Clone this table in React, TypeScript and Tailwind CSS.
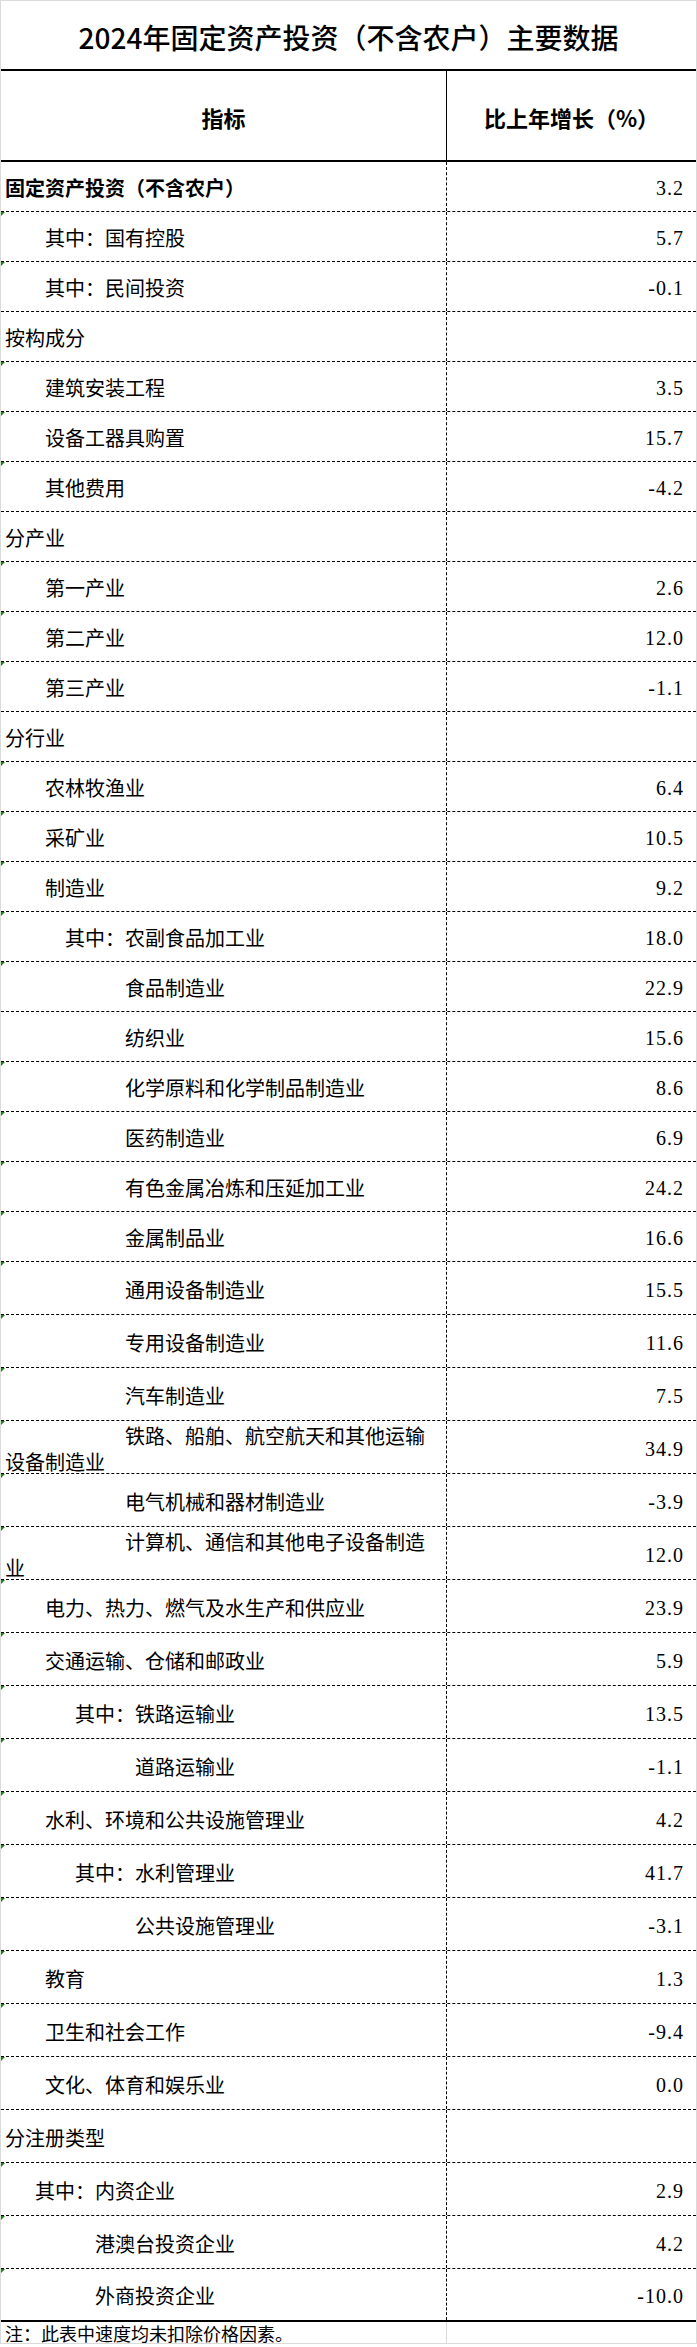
import React from "react";

type Row = {
  label: string;
  value?: string;
  indent: number;
  tri?: boolean;
  bold?: boolean;
  h: "a" | "b" | "c";
};

const indentClass: Record<number, string> = {
  0: "indent-0",
  30: "indent-[30px]",
  40: "indent-[40px]",
  60: "indent-[60px]",
  70: "indent-[70px]",
  90: "indent-[90px]",
  120: "indent-[120px]",
  130: "indent-[130px]",
};

const heightClass = {
  a: "h-[50px] border-b border-dashed border-black",
  b: "h-[53px] border-b border-dashed border-black",
  c: "h-[51px]",
};

const rows: Row[] = [
  { label: "固定资产投资（不含农户）", value: "3.2", indent: 0, bold: true, h: "a" },
  { label: "其中：国有控股", value: "5.7", indent: 40, tri: true, h: "a" },
  { label: "其中：民间投资", value: "-0.1", indent: 40, tri: true, h: "a" },
  { label: "按构成分", indent: 0, h: "a" },
  { label: "建筑安装工程", value: "3.5", indent: 40, tri: true, h: "a" },
  { label: "设备工器具购置", value: "15.7", indent: 40, tri: true, h: "a" },
  { label: "其他费用", value: "-4.2", indent: 40, tri: true, h: "a" },
  { label: "分产业", indent: 0, h: "a" },
  { label: "第一产业", value: "2.6", indent: 40, tri: true, h: "a" },
  { label: "第二产业", value: "12.0", indent: 40, tri: true, h: "a" },
  { label: "第三产业", value: "-1.1", indent: 40, tri: true, h: "a" },
  { label: "分行业", indent: 0, h: "a" },
  { label: "农林牧渔业", value: "6.4", indent: 40, tri: true, h: "a" },
  { label: "采矿业", value: "10.5", indent: 40, tri: true, h: "a" },
  { label: "制造业", value: "9.2", indent: 40, tri: true, h: "a" },
  { label: "其中：农副食品加工业", value: "18.0", indent: 60, tri: true, h: "a" },
  { label: "食品制造业", value: "22.9", indent: 120, tri: true, h: "a" },
  { label: "纺织业", value: "15.6", indent: 120, h: "a" },
  { label: "化学原料和化学制品制造业", value: "8.6", indent: 120, tri: true, h: "a" },
  { label: "医药制造业", value: "6.9", indent: 120, tri: true, h: "a" },
  { label: "有色金属冶炼和压延加工业", value: "24.2", indent: 120, tri: true, h: "a" },
  { label: "金属制品业", value: "16.6", indent: 120, tri: true, h: "a" },
  { label: "通用设备制造业", value: "15.5", indent: 120, tri: true, h: "b" },
  { label: "专用设备制造业", value: "11.6", indent: 120, tri: true, h: "b" },
  { label: "汽车制造业", value: "7.5", indent: 120, tri: true, h: "b" },
  { label: "铁路、船舶、航空航天和其他运输设备制造业", value: "34.9", indent: 120, tri: true, h: "b" },
  { label: "电气机械和器材制造业", value: "-3.9", indent: 120, tri: true, h: "b" },
  { label: "计算机、通信和其他电子设备制造业", value: "12.0", indent: 120, tri: true, h: "b" },
  { label: "电力、热力、燃气及水生产和供应业", value: "23.9", indent: 40, tri: true, h: "b" },
  { label: "交通运输、仓储和邮政业", value: "5.9", indent: 40, tri: true, h: "b" },
  { label: "其中：铁路运输业", value: "13.5", indent: 70, tri: true, h: "b" },
  { label: "道路运输业", value: "-1.1", indent: 130, tri: true, h: "b" },
  { label: "水利、环境和公共设施管理业", value: "4.2", indent: 40, tri: true, h: "b" },
  { label: "其中：水利管理业", value: "41.7", indent: 70, tri: true, h: "b" },
  { label: "公共设施管理业", value: "-3.1", indent: 130, tri: true, h: "b" },
  { label: "教育", value: "1.3", indent: 40, tri: true, h: "b" },
  { label: "卫生和社会工作", value: "-9.4", indent: 40, tri: true, h: "b" },
  { label: "文化、体育和娱乐业", value: "0.0", indent: 40, tri: true, h: "b" },
  { label: "分注册类型", indent: 0, h: "b" },
  { label: "其中：内资企业", value: "2.9", indent: 30, tri: true, h: "b" },
  { label: "港澳台投资企业", value: "4.2", indent: 90, tri: true, h: "b" },
  { label: "外商投资企业", value: "-10.0", indent: 90, tri: true, h: "c" },
];

function DataRow({ r }: { r: Row }) {
  return (
    <div className={`flex box-border ${heightClass[r.h]}`}>
      <div className="relative flex w-[446px] shrink-0 items-center border-r border-dashed border-black pl-[4px] pr-[6px] pt-[3px]">
        {r.tri && (
          <div className="absolute left-0 top-0 h-0 w-0 border-r-[4px] border-t-[4px] border-r-transparent border-t-[#17870f]" />
        )}
        <div
          className={`w-full text-[20px] leading-[26px] ${indentClass[r.indent]} ${
            r.bold ? "font-bold" : "font-normal"
          }`}
        >
          {r.label}
        </div>
      </div>
      <div className="flex flex-1 items-center justify-end pr-[12px] pt-[3px] font-['Liberation_Serif','Noto_Sans_CJK_SC',serif] text-[20px] tracking-[1px]">
        {r.value ?? ""}
      </div>
    </div>
  );
}

export default function App() {
  return (
    <div className="w-[697px] bg-white font-['Noto_Sans_CJK_SC',sans-serif] text-black">
      <div className="box-border w-[697px] border-x border-[#dadada]">
        <div className="flex h-[69px] items-center justify-center border-t border-[#dadada] pt-[4px] text-[28px] font-medium">
          2024年固定资产投资（不含农户）主要数据
        </div>
        <div className="box-border flex h-[93px] border-y-2 border-black">
          <div className="flex w-[446px] shrink-0 items-center justify-center border-r border-black pt-[4px] text-[22px] font-bold">
            指标
          </div>
          <div className="flex flex-1 items-center justify-center pt-[4px] text-[22px] font-bold">
            比上年增长（%）
          </div>
        </div>
        {rows.map((r, i) => (
          <DataRow key={i} r={r} />
        ))}
        <div className="box-border flex h-[24px] border-t-2 border-b border-t-black border-b-[#dadada]">
          <div className="flex w-[446px] shrink-0 items-center border-r border-[#dadada] pl-[4px] text-[18px] leading-[20px]">
            注：此表中速度均未扣除价格因素。
          </div>
          <div className="flex-1" />
        </div>
      </div>
    </div>
  );
}
